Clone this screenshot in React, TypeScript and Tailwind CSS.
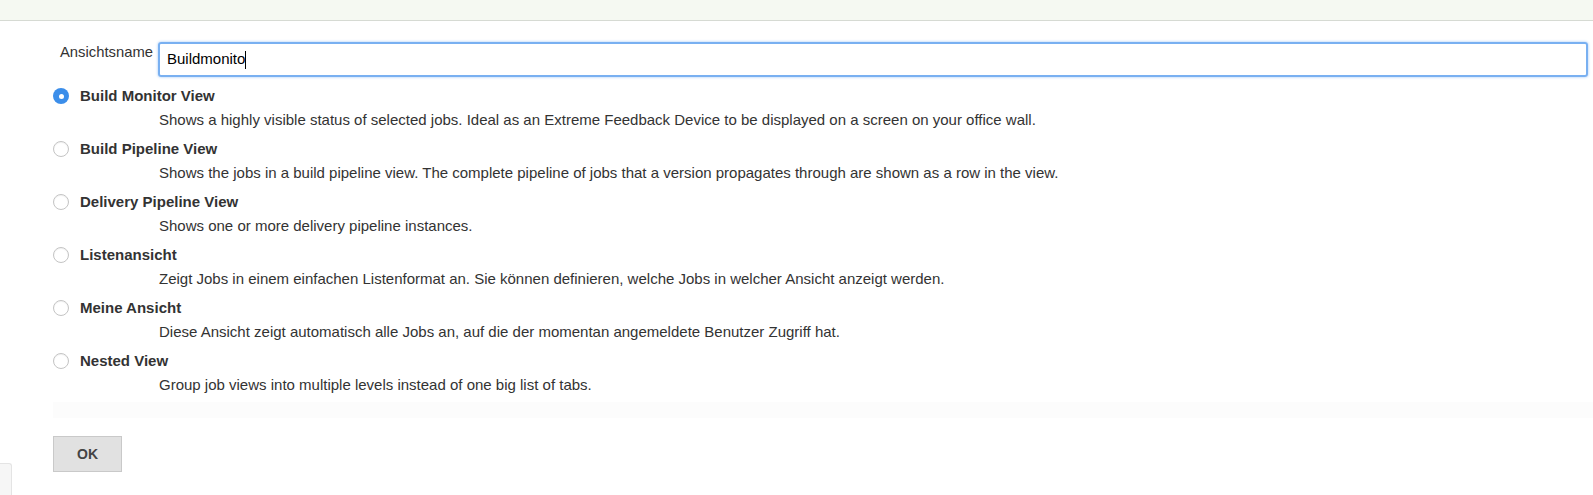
import { useState } from "react";

const views = [
  {
    id: "monitor",
    name: "Build Monitor View",
    desc: "Shows a highly visible status of selected jobs. Ideal as an Extreme Feedback Device to be displayed on a screen on your office wall.",
  },
  {
    id: "pipeline",
    name: "Build Pipeline View",
    desc: "Shows the jobs in a build pipeline view. The complete pipeline of jobs that a version propagates through are shown as a row in the view.",
  },
  {
    id: "delivery",
    name: "Delivery Pipeline View",
    desc: "Shows one or more delivery pipeline instances.",
  },
  {
    id: "list",
    name: "Listenansicht",
    desc: "Zeigt Jobs in einem einfachen Listenformat an. Sie können definieren, welche Jobs in welcher Ansicht anzeigt werden.",
  },
  {
    id: "my",
    name: "Meine Ansicht",
    desc: "Diese Ansicht zeigt automatisch alle Jobs an, auf die der momentan angemeldete Benutzer Zugriff hat.",
  },
  {
    id: "nested",
    name: "Nested View",
    desc: "Group job views into multiple levels instead of one big list of tabs.",
  },
];

const App = () => {
  const [selected, setSelected] = useState("monitor");

  return (
    <div className="relative min-h-[495px] bg-white text-[#333] font-['Liberation_Sans',Arial,sans-serif]">
      {/* top bar */}
      <div className="h-[21px] bg-[#f5f9f2] border-b border-[#d6dad3]" />

      {/* name row */}
      <div className="flex items-start mt-[21px]">
        <label className="ml-[60px] w-[93px] pt-[1px] text-[14.8px] leading-[18px] whitespace-nowrap">
          Ansichtsname
        </label>
        <div className="ml-[5px] mr-[5px] flex-1 h-[35px] flex items-center rounded-[3px] border-2 border-[#79b0f1] shadow-[0_0_3px_#9fc6f6] pl-[7px] text-[15px] text-black">
          Buildmonito
          <span className="inline-block w-[1px] h-[18px] bg-black" />
        </div>
      </div>

      {/* view types */}
      <div className="mt-[7px] pl-[53px]">
        {views.map((v) => (
          <div key={v.id} className="mb-[5px]">
            <div
              className="flex items-center h-[24px] cursor-pointer"
              onClick={() => setSelected(v.id)}
            >
              {selected === v.id ? (
                <span className="w-[16px] h-[16px] rounded-full bg-[#3b8eea] flex items-center justify-center">
                  <span className="w-[5px] h-[5px] rounded-full bg-white" />
                </span>
              ) : (
                <span className="w-[16px] h-[16px] rounded-full border border-[#c4c4c4] bg-white shadow-[inset_0_1px_1px_rgba(0,0,0,0.06)]" />
              )}
              <span className="ml-[11px] font-bold text-[15px]">{v.name}</span>
            </div>
            <div className="h-[24px] flex items-center pl-[106px] text-[15px]">{v.desc}</div>
          </div>
        ))}
      </div>

      {/* faint bottom band */}
      <div className="ml-[53px] mt-[5px] h-[16px] bg-[#fcfcfc]" />

      {/* submit */}
      <div className="pl-[53px] mt-[18px]">
        <button className="w-[69px] h-[36px] bg-[#e1e1e1] border border-[#c9c9c9] text-[14px] font-bold text-[#444]">
          OK
        </button>
      </div>

      {/* side tab */}
      <div className="absolute left-0 bottom-0 w-[12px] h-[32px] bg-[#f6f6f6] border border-l-0 border-b-0 border-[#e4e4e4] rounded-tr-[3px]" />
    </div>
  );
};

export default App;
